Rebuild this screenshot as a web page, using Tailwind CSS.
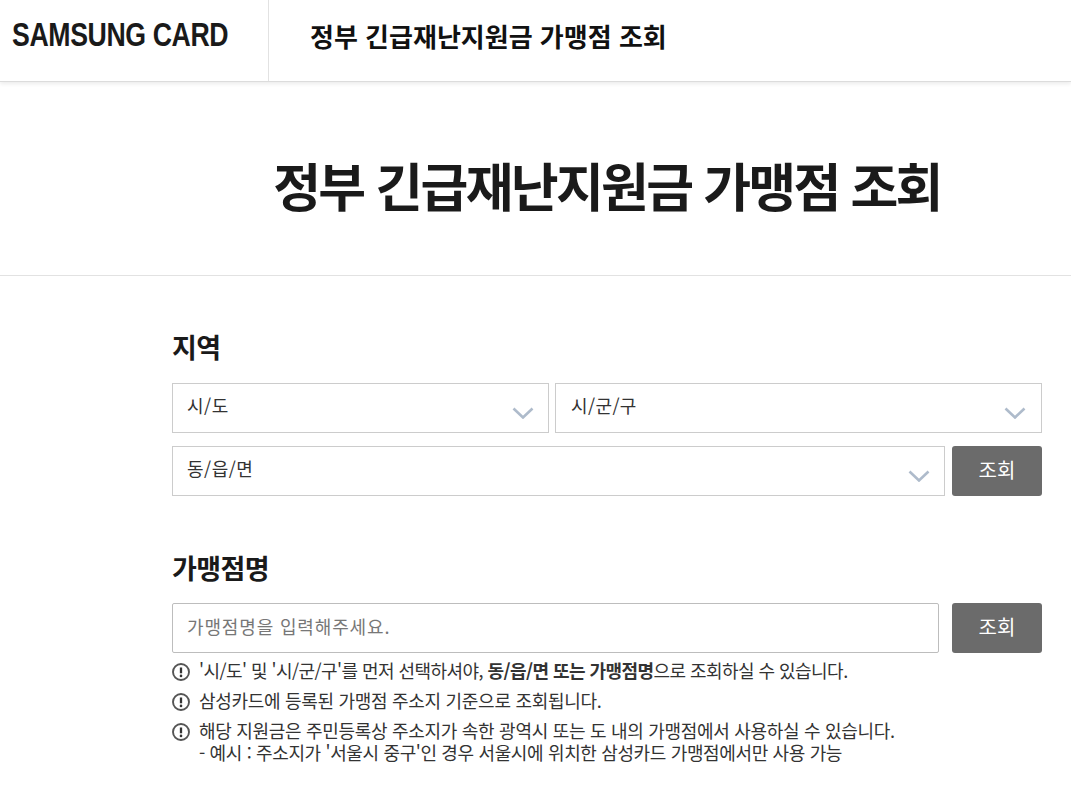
<!DOCTYPE html>
<html lang="ko">
<head>
    <meta charset="UTF-8">
    <meta name="viewport" content="width=device-width, initial-scale=1.0">
    <title>정부 긴급재난지원금 가맹점 조회</title>
    <script src="https://cdn.jsdelivr.net/npm/@tailwindcss/browser@4"></script>
</head>
<body class="bg-white text-[#1a1a1a] font-['Noto_Sans_CJK_KR','Noto_Sans',sans-serif] overflow-hidden">
    <!-- Header -->
    <header class="flex h-[82px] border-b border-[#dcdcdc] shadow-[0_2px_4px_rgba(0,0,0,0.08)]">
        <div class="w-[269px] shrink-0 border-r border-[#e2e2e2] pl-[12px] flex items-center">
            <span class="font-['Liberation_Sans',sans-serif] font-bold text-[34px] leading-none tracking-[-0.5px] text-[#1a1a1a] mb-[13px] origin-left scale-x-[0.785] whitespace-nowrap">SAMSUNG CARD</span>
        </div>
        <div class="pl-[41px] flex items-center pb-[11px] text-[26px] font-semibold text-[#111]">정부 긴급재난지원금 가맹점 조회</div>
    </header>

    <!-- Page title -->
    <div class="h-[194px] border-b border-[#e2e2e2] flex justify-center pl-[143px] pt-[65px]">
        <h1 class="text-[52px] leading-[76px] font-semibold tracking-[-2.7px] text-[#1a1a1a] whitespace-nowrap">정부 긴급재난지원금 가맹점 조회</h1>
    </div>

    <main class="ml-[172px] w-[870px] pt-[52px]">
        <h2 class="text-[27px] font-semibold leading-[38px] tracking-[-0.6px] mb-[17px]">지역</h2>

        <div class="flex gap-[6px] mb-[13px]">
            <div class="w-[377px] h-[50px] border border-[#cccccc] flex items-center justify-between pl-[14px] pr-[14px]">
                <span class="text-[18px] text-[#333] pb-[6px] tracking-[0.5px]">시/도</span>
                <svg class="w-[22px] h-[12px] mt-[9px]" viewBox="0 0 22 12" fill="none" stroke="#aebbcb" stroke-width="2.6"><path d="M1.5 1.5 L11 10.5 L20.5 1.5"/></svg>
            </div>
            <div class="w-[487px] h-[50px] border border-[#cccccc] flex items-center justify-between pl-[15px] pr-[15px]">
                <span class="text-[18px] text-[#333] pb-[6px] tracking-[0.4px]">시/군/구</span>
                <svg class="w-[22px] h-[12px] mt-[9px]" viewBox="0 0 22 12" fill="none" stroke="#aebbcb" stroke-width="2.6"><path d="M1.5 1.5 L11 10.5 L20.5 1.5"/></svg>
            </div>
        </div>

        <div class="flex justify-between">
            <div class="w-[773px] h-[50px] border border-[#cccccc] flex items-center justify-between pl-[14px] pr-[14px]">
                <span class="text-[18px] text-[#333] pb-[6px] tracking-[0.5px]">동/읍/면</span>
                <svg class="w-[22px] h-[12px] mt-[9px]" viewBox="0 0 22 12" fill="none" stroke="#aebbcb" stroke-width="2.6"><path d="M1.5 1.5 L11 10.5 L20.5 1.5"/></svg>
            </div>
            <button class="w-[90px] h-[50px] bg-[#6b6b6b] rounded-[3px] text-white text-[20px] pb-[3px]">조회</button>
        </div>

        <h2 class="text-[27px] font-semibold leading-[38px] tracking-[-0.6px] mt-[53px] mb-[16px]">가맹점명</h2>

        <div class="flex justify-between">
            <div class="w-[767px] h-[50px] border border-[#bdbdbd] rounded-[2px] flex items-center pl-[14px]">
                <span class="text-[18px] text-[#777] pb-[4px] tracking-[0.85px]">가맹점명을 입력해주세요.</span>
            </div>
            <button class="w-[90px] h-[50px] bg-[#6b6b6b] rounded-[3px] text-white text-[20px] pb-[3px]">조회</button>
        </div>

        <!-- Notes -->
        <ul class="mt-[6px] text-[18px] leading-[22px] tracking-[-0.3px] text-[#333] w-[900px]">
            <li class="flex gap-[9px] mb-[8px]">
                <svg class="w-[18px] h-[18px] mt-[4px] shrink-0" viewBox="0 0 18 18" fill="none"><circle cx="9" cy="9" r="8" stroke="#555" stroke-width="1.9"/><path d="M9 4.5V10.3" stroke="#333" stroke-width="2.3"/><circle cx="9" cy="12.9" r="1.3" fill="#333"/></svg>
                <span class="tracking-[-0.55px]">'시/도' 및 '시/군/구'를 먼저 선택하셔야, <b class="font-bold">동/읍/면 또는 가맹점명</b>으로 조회하실 수 있습니다.</span>
            </li>
            <li class="flex gap-[9px] mb-[8px]">
                <svg class="w-[18px] h-[18px] mt-[4px] shrink-0" viewBox="0 0 18 18" fill="none"><circle cx="9" cy="9" r="8" stroke="#555" stroke-width="1.9"/><path d="M9 4.5V10.3" stroke="#333" stroke-width="2.3"/><circle cx="9" cy="12.9" r="1.3" fill="#333"/></svg>
                <span>삼성카드에 등록된 가맹점 주소지 기준으로 조회됩니다.</span>
            </li>
            <li class="flex gap-[9px]">
                <svg class="w-[18px] h-[18px] mt-[4px] shrink-0" viewBox="0 0 18 18" fill="none"><circle cx="9" cy="9" r="8" stroke="#555" stroke-width="1.9"/><path d="M9 4.5V10.3" stroke="#333" stroke-width="2.3"/><circle cx="9" cy="12.9" r="1.3" fill="#333"/></svg>
                <span>해당 지원금은 주민등록상 주소지가 속한 광역시 또는 도 내의 가맹점에서 사용하실 수 있습니다.<br><span class="tracking-[-0.36px]">- 예시 : 주소지가 '서울시 중구'인 경우 서울시에 위치한 삼성카드 가맹점에서만 사용 가능</span></span>
            </li>
        </ul>
    </main>
</body>
</html>
